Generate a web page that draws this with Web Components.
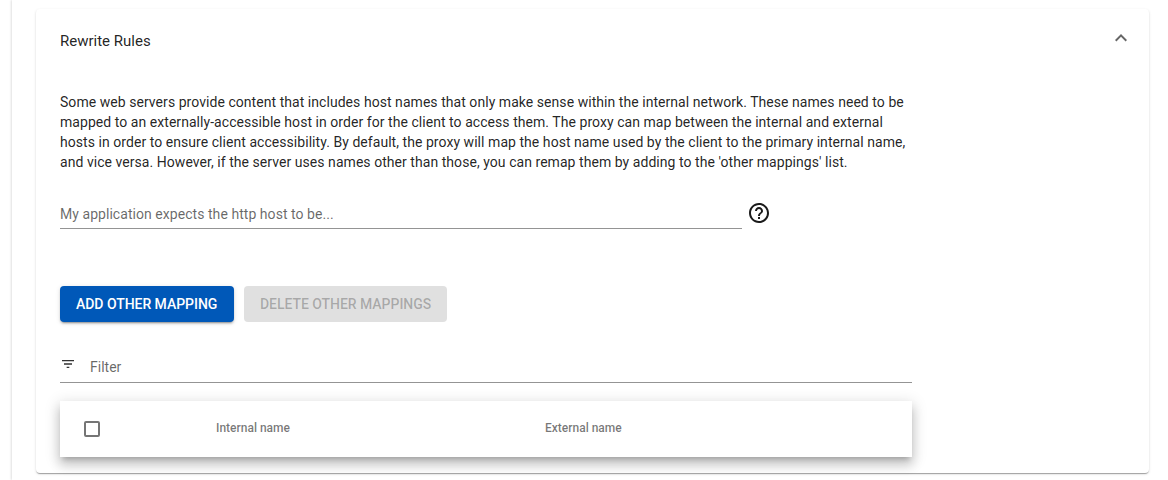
<!DOCTYPE html>
<html>
<head>
<meta charset="utf-8">
<style>
    html, body { margin: 0; height: 100%; overflow: hidden; background: #fff; font-family: Roboto, "Liberation Sans", sans-serif; }
</style>
</head>
<body>
<page-shell>
    <expansion-panel title="Rewrite Rules">
        <p>Some web servers provide content that includes host names that only make sense within the internal network. These names need to be mapped to an externally-accessible host in order for the client to access them. The proxy can map between the internal and external hosts in order to ensure client accessibility. By default, the proxy will map the host name used by the client to the primary internal name, and vice versa. However, if the server uses names other than those, you can remap them by adding to the 'other mappings' list.</p>
        <host-field placeholder="My application expects the http host to be..."></host-field>
        <action-bar></action-bar>
        <filter-field></filter-field>
        <mapping-table></mapping-table>
    </expansion-panel>
</page-shell>

<script>
class PageShell extends HTMLElement {
    constructor() {
        super();
        this.attachShadow({ mode: "open" });
        this.shadowRoot.innerHTML = `
        <style>
            :host {
                display: block;
                margin-left: 12px;
                height: 480px;
                padding: 9px 19px 0 24px;
                box-sizing: border-box;
                background: #fff;
                box-shadow: -1px 0 2px rgba(0,0,0,.12);
            }
        </style>
        <slot></slot>
        `;
    }
}

class ExpansionPanel extends HTMLElement {
    constructor() {
        super();
        this.attachShadow({ mode: "open" });
        this.shadowRoot.innerHTML = `
        <style>
            :host {
                display: block;
                height: 464px;
                box-sizing: border-box;
                border-radius: 4px;
                background: #fff;
                color: rgba(0,0,0,.87);
                box-shadow: 0 2px 1px -1px rgba(0,0,0,.2), 0 1px 1px 0 rgba(0,0,0,.14), 0 1px 3px 0 rgba(0,0,0,.12);
            }
            header {
                height: 64px;
                padding: 0 24px;
                display: flex;
                align-items: center;
                justify-content: space-between;
                font-size: 15px;
            }
            svg { display: block; margin-right: -8px; margin-top: -6px; }
            .body {
                padding: 19px 24px 0;
                width: 852px;
            }
        </style>
        <header>
            <span>${this.getAttribute("title")}</span>
            <svg width="24" height="24" viewBox="0 0 24 24" fill="#666"><path d="M7.41 15.41 12 10.83l4.59 4.58L18 14l-6-6-6 6z"/></svg>
        </header>
        <div class="body"><slot></slot></div>
        `;
    }
}

class HostField extends HTMLElement {
    constructor() {
        super();
        this.attachShadow({ mode: "open" });
        this.shadowRoot.innerHTML = `
        <style>
            :host { display: flex; align-items: flex-start; margin-top: 20px; }
            .input {
                width: 682px;
                height: 37px;
                box-sizing: border-box;
                border-bottom: 1px solid #949494;
                font-size: 14px;
                line-height: 20px;
                letter-spacing: .05px;
                padding-top: 12px;
                color: rgba(0,0,0,.6);
            }
            svg { display: block; margin: 9px 0 0 5px; }
        </style>
        <div class="input">${this.getAttribute("placeholder")}</div>
        <svg width="24" height="24" viewBox="0 0 24 24" fill="#1a1a1a"><path d="M11 18h2v-2h-2v2zm1-16C6.48 2 2 6.48 2 12s4.48 10 10 10 10-4.48 10-10S17.52 2 12 2zm0 18c-4.41 0-8-3.59-8-8s3.59-8 8-8 8 3.59 8 8-3.59 8-8 8zm0-14c-2.21 0-4 1.79-4 4h2c0-1.1.9-2 2-2s2 .9 2 2c0 2-3 1.75-3 5h2c0-2.25 3-2.5 3-5 0-2.21-1.79-4-4-4z"/></svg>
        `;
    }
}

class ActionBar extends HTMLElement {
    constructor() {
        super();
        this.attachShadow({ mode: "open" });
        this.shadowRoot.innerHTML = `
        <style>
            :host { display: flex; gap: 10px; margin-top: 57px; }
            button {
                height: 36px;
                padding: 0 0 0 16px;
                border: 0;
                border-radius: 4px;
                font: 500 14px/36px Roboto, sans-serif;
                letter-spacing: -.04px;
                text-align: left;
                text-transform: uppercase;
            }
            .primary {
                width: 174px;
                background: #0058b8;
                color: #fff;
                box-shadow: 0 3px 1px -2px rgba(0,0,0,.2), 0 2px 2px 0 rgba(0,0,0,.14), 0 1px 5px 0 rgba(0,0,0,.12);
            }
            .off { width: 203px; background: #e0e0e0; color: rgba(0,0,0,.26); }
        </style>
        <button class="primary">Add other mapping</button>
        <button class="off" disabled>Delete other mappings</button>
        `;
    }
}

class FilterField extends HTMLElement {
    constructor() {
        super();
        this.attachShadow({ mode: "open" });
        this.shadowRoot.innerHTML = `
        <style>
            :host {
                display: flex;
                align-items: center;
                height: 37px;
                margin-top: 24px;
                box-sizing: border-box;
                border-bottom: 1px solid #949494;
                font-size: 14px;
                color: rgba(0,0,0,.6);
            }
            svg { display: block; }
            span { margin-left: 14px; padding-top: 5px; }
        </style>
        <svg width="16" height="16" viewBox="0 0 24 24" fill="#333"><path d="M10 18h4v-2h-4v2zM3 6v2h18V6H3zm3 7h12v-2H6v2z"/></svg>
        <span>Filter</span>
        `;
    }
}

class MappingTable extends HTMLElement {
    constructor() {
        super();
        this.attachShadow({ mode: "open" });
        this.shadowRoot.innerHTML = `
        <style>
            :host {
                display: grid;
                grid-template-columns: 156px 329px 1fr;
                align-items: center;
                height: 56px;
                margin-top: 18px;
                background: #fff;
                font-size: 12px;
                font-weight: 500;
                color: rgba(0,0,0,.54);
                box-shadow: 0 5px 5px -3px rgba(0,0,0,.2), 0 8px 10px 1px rgba(0,0,0,.14), 0 3px 14px 2px rgba(0,0,0,.12);
            }
            .box {
                width: 12px;
                height: 12px;
                margin: 0 0 0 24px;
                border: 2px solid rgba(0,0,0,.54);
                border-radius: 2px;
            }
            span { margin-top: -2px; }
        </style>
        <div class="box"></div>
        <span>Internal name</span>
        <span>External name</span>
        `;
    }
}

customElements.define("page-shell", PageShell);
customElements.define("expansion-panel", ExpansionPanel);
customElements.define("host-field", HostField);
customElements.define("action-bar", ActionBar);
customElements.define("filter-field", FilterField);
customElements.define("mapping-table", MappingTable);
</script>
<style>
    expansion-panel p { margin: 0; font-size: 14px; line-height: 20px; letter-spacing: .05px; }
</style>
</body>
</html>
